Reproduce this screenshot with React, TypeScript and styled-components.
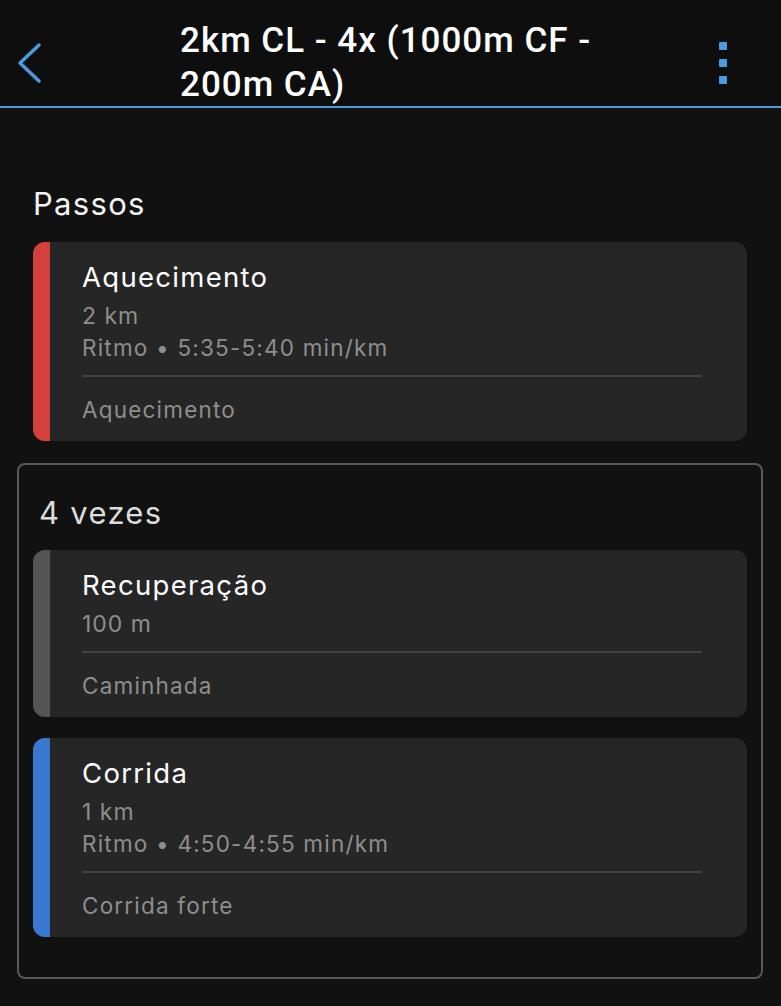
import { FC } from "react";
import styled, { createGlobalStyle } from "styled-components";

const GlobalStyle = createGlobalStyle`
  html, body {
    margin: 0;
    padding: 0;
    background: #111111;
  }
  body {
    font-family: Inter, "Noto Sans", "Liberation Sans", sans-serif;
    -webkit-font-smoothing: antialiased;
  }
`;

const Page = styled.div`
  min-height: 1006px;
  background: #111111;
  color: #f2f2f2;
`;

const Header = styled.header`
  display: flex;
  align-items: flex-start;
  height: 108px;
  padding-top: 19px;
  box-sizing: border-box;
  background: #0e0e0e;
  border-bottom: 2px solid #4a9be0;
`;

const BackButton = styled.button`
  width: 180px;
  height: 88px;
  padding: 0 0 0 16px;
  margin: 0;
  border: 0;
  background: transparent;
  display: flex;
  align-items: center;
  cursor: pointer;
`;

const Title = styled.h1`
  flex: 0 0 450px;
  margin: 0;
  font-family: Roboto, "Liberation Sans", sans-serif;
  font-weight: 500;
  font-size: 35px;
  line-height: 44px;
  color: #ffffff;
  letter-spacing: 1px;
`;

const MenuButton = styled.button`
  margin: 0 0 0 auto;
  width: 80px;
  height: 88px;
  border: 0;
  padding: 0 0 0 18px;
  background: transparent;
  display: flex;
  flex-direction: column;
  align-items: flex-start;
  justify-content: center;
  gap: 9px;
  cursor: pointer;
`;

const Dot = styled.span`
  display: block;
  width: 8px;
  height: 8px;
  border-radius: 1px;
  background: #4a9be0;
`;

const Main = styled.main`
  padding: 0 18px 30px 17px;
`;

const SectionTitle = styled.h2<{ $dim?: boolean }>`
  margin: 0;
  font-weight: 400;
  font-size: 31px;
  line-height: 38px;
  letter-spacing: 1.3px;
  color: ${(p) => (p.$dim ? "#dcdcdc" : "#f4f4f4")};
`;

const StepsSection = styled.section`
  padding: 77px 16px 0 16px;
  display: flex;
  flex-direction: column;
  gap: 19px;
`;

const RepeatBox = styled.section`
  margin-top: 22px;
  border: 2px solid #585858;
  border-radius: 8px;
  padding: 29px 14px 40px 14px;
  display: flex;
  flex-direction: column;
  gap: 21px;

  & > h2 {
    margin-left: 6px;
    margin-bottom: -3px;
  }
`;

const Card = styled.article`
  display: flex;
  background: #262626;
  border-radius: 12px;
  overflow: hidden;
`;

const Stripe = styled.div<{ $color: string }>`
  flex: 0 0 17px;
  background: ${(p) => p.$color};
`;

const CardBody = styled.div`
  flex: 1;
  padding: 17px 45px 15px 32px;
`;

const StepName = styled.div`
  font-size: 27.5px;
  line-height: 36px;
  letter-spacing: 1.3px;
  color: #ffffff;
  margin-bottom: 5px;
`;

const Detail = styled.div<{ $small?: boolean }>`
  font-size: ${(p) => (p.$small ? "22.5px" : "23px")};
  line-height: 32px;
  letter-spacing: ${(p) => (p.$small ? "1.2px" : "1px")};
  color: #8e8e8e;
`;

const Divider = styled.hr`
  border: 0;
  height: 2px;
  background: #414141;
  margin: 11px 0 17px 0;
`;

type Step = {
  name: string;
  amount: string;
  pace?: string;
  kind: string;
  color: string;
};

const warmup: Step = {
  name: "Aquecimento",
  amount: "2 km",
  pace: "5:35-5:40 min/km",
  kind: "Aquecimento",
  color: "#d4403a",
};

const repeats: Step[] = [
  { name: "Recuperação", amount: "100 m", kind: "Caminhada", color: "#545454" },
  {
    name: "Corrida",
    amount: "1 km",
    pace: "4:50-4:55 min/km",
    kind: "Corrida forte",
    color: "#3a78cf",
  },
];

const StepCard: FC<{ step: Step }> = ({ step }) => (
  <Card>
    <Stripe $color={step.color} />
    <CardBody>
      <StepName>{step.name}</StepName>
      <Detail>{step.amount}</Detail>
      {step.pace && <Detail $small>Ritmo • {step.pace}</Detail>}
      <Divider />
      <Detail $small>{step.kind}</Detail>
    </CardBody>
  </Card>
);

const App: FC = () => {
  return (
    <>
      <GlobalStyle />
      <Page>
        <Header>
          <BackButton aria-label="Voltar">
            <svg width="26" height="42" viewBox="0 0 26 42" fill="none">
              <path
                d="M23 3 L4 21 L23 39"
                stroke="#4a9be0"
                strokeWidth="3.5"
                strokeLinecap="round"
                strokeLinejoin="round"
              />
            </svg>
          </BackButton>
          <Title>2km CL - 4x (1000m CF - 200m CA)</Title>
          <MenuButton aria-label="Menu">
            <Dot />
            <Dot />
            <Dot />
          </MenuButton>
        </Header>
        <Main>
          <StepsSection>
            <SectionTitle>Passos</SectionTitle>
            <StepCard step={warmup} />
          </StepsSection>
          <RepeatBox>
            <SectionTitle $dim>4 vezes</SectionTitle>
            {repeats.map((s) => (
              <StepCard key={s.name} step={s} />
            ))}
          </RepeatBox>
        </Main>
      </Page>
    </>
  );
};

export default App;
